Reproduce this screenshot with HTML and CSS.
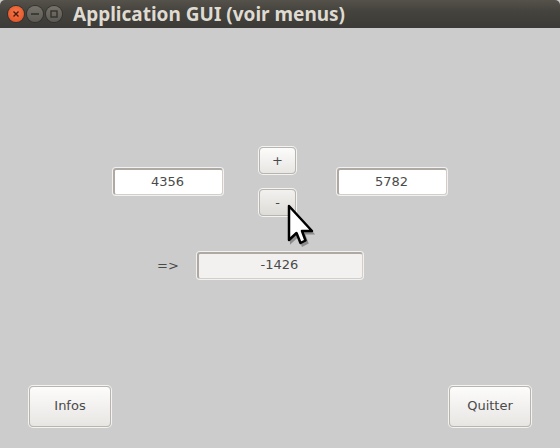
FILE: index.html
```html
<!DOCTYPE html>
<html lang="en">
<head>
    <meta charset="UTF-8">
    <meta name="viewport" content="width=device-width, initial-scale=1.0">
    <title>Application GUI (voir menus)</title>
    <link rel="stylesheet" href="styles.css">
</head>
<body>
    <div class="window">
        <header class="titlebar">
            <div class="controls">
                <span class="ctl ctl-close">
                    <svg width="8" height="8" viewBox="0 0 8 8"><path d="M1.500 1.500l5 5M6.500 1.500l-5 5" stroke="#4a1a0c" stroke-width="1.400"/></svg>
                </span>
                <span class="ctl">
                    <svg width="8" height="8" viewBox="0 0 8 8"><path d="M0 4h8" stroke="#33322e" stroke-width="1.600"/></svg>
                </span>
                <span class="ctl">
                    <svg width="8" height="8" viewBox="0 0 8 8"><rect x="1" y="1" width="6" height="6" fill="none" stroke="#33322e" stroke-width="1.400"/></svg>
                </span>
            </div>
            <h1>Application GUI (voir menus)</h1>
        </header>

        <main class="content">
            <div class="calc-row">
                <div class="field">4356</div>
                <div class="ops">
                    <button class="btn btn-op">+</button>
                    <button class="btn btn-op btn-hover">-</button>
                </div>
                <div class="field">5782</div>
            </div>

            <div class="result-row">
                <span class="arrow">=&gt;</span>
                <div class="field field-result">-1426</div>
            </div>

            <div class="actions">
                <button class="btn btn-big">Infos</button>
                <button class="btn btn-big">Quitter</button>
            </div>
        </main>

        <svg class="cursor" width="32" height="44" viewBox="0 0 32 44">
            <path d="M5 4.500v34l7.500-7 4 10 5-2.500-3.500-9.500h9z" fill="#000" stroke="#000" stroke-width="2" opacity=".3" transform="translate(1 1)"/>
            <path d="M4 3v34l7.500-7 4 10 5-2.500-3.500-9.500h10z" fill="#fff" stroke="#000" stroke-width="2.500" stroke-linejoin="round"/>
        </svg>
    </div>
</body>
</html>
```

FILE: styles.css
```css
:root {
    --bg: #cccccc;
    --text: #4a4a4a;
    --edge: #aeaaa3;
    --glow: #f2f1f0;
}

html, body {
    margin: 0;
    height: 100%;
    background: var(--bg);
}

.window {
    position: relative;
    width: 560px;
    height: 448px;
    overflow: hidden;
    display: flex;
    flex-direction: column;
    font-family: "DejaVu Sans", sans-serif;
    font-size: 13px;
    color: var(--text);
}

.titlebar {
    height: 28px;
    flex: none;
    display: flex;
    align-items: center;
    background: linear-gradient(#55524b 0%, #45433d 40%, #3c3b37 100%);
    border-radius: 5px 5px 0 0;
}

.titlebar h1 {
    margin: 0 0 0 11px;
    font-family: "Noto Sans", sans-serif;
    font-size: 19px;
    font-weight: 700;
    line-height: 28px;
    color: #dfdbd2;
    white-space: nowrap;
}

.controls {
    display: flex;
    gap: 3px;
    margin-left: 8px;
}

.ctl {
    width: 16px;
    height: 16px;
    border-radius: 50%;
    display: flex;
    align-items: center;
    justify-content: center;
    background: linear-gradient(#75726b, #5c5a53);
    box-shadow: 0 0 0 1px #33322e;
}

.ctl-close {
    background: radial-gradient(circle at 50% 40%, #f5784b, #e04d1f);
}

.content {
    flex: 1;
    display: flex;
    flex-direction: column;
}

.calc-row {
    display: flex;
    align-items: center;
    margin: 118px 0 0 112px;
}

.ops {
    display: flex;
    flex-direction: column;
    gap: 13px;
    margin: 0 39px 0 34px;
}

.field {
    box-sizing: border-box;
    width: 110px;
    height: 27px;
    margin: 1px;
    padding-right: 2px;
    line-height: 23px;
    text-align: center;
    background: #fff;
    border: 1px solid #d2cfca;
    border-top: 2px solid var(--edge);
    border-left: 2px solid var(--edge);
    border-radius: 3px;
    box-shadow: 0 0 0 1px var(--glow);
}

.result-row {
    display: flex;
    align-items: center;
    margin: 34px 0 0 157px;
}

.arrow {
    width: 39px;
}

.field-result {
    width: 166px;
    line-height: 22px;
    background: #f2f1f0;
}

.btn {
    box-sizing: border-box;
    padding: 0 0 2px;
    font: inherit;
    color: inherit;
    border: 1px solid #b8b5ae;
    border-radius: 4px;
    background: linear-gradient(#fcfcfb, #e8e6e3);
    box-shadow: 0 0 0 1px #f4f3f2;
}

.btn-op {
    width: 37px;
    height: 27px;
    margin: 1px;
    padding: 0;
}

.btn-hover {
    background: linear-gradient(#f2f1ef, #dedcd8);
}

.actions {
    display: flex;
    justify-content: space-between;
    margin: auto 29px 21px;
}

.btn-big {
    width: 82px;
    height: 41px;
}

.cursor {
    position: absolute;
    left: 285px;
    top: 203px;
}
```
